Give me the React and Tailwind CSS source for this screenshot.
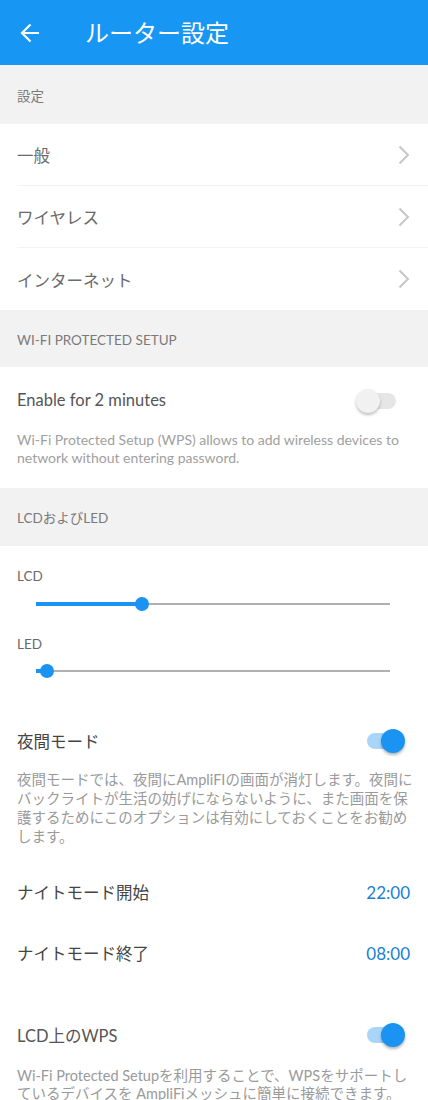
import { useState } from "react";

const font = { fontFamily: "Lato, 'Noto Sans CJK JP', sans-serif" };

function Chevron() {
  return (
    <svg width="12" height="20" viewBox="0 0 12 20" fill="none">
      <path d="M1.5 1.5 L10 10 L1.5 18.5" stroke="#c6c6c6" strokeWidth="2" />
    </svg>
  );
}

function Toggle({ on }) {
  if (on) {
    return (
      <div className="relative w-[38px] h-[24px] flex items-center">
        <div className="w-[36px] h-[16px] rounded-full bg-[#a9d5fb]" />
        <div className="absolute right-0 top-0 w-[24px] h-[24px] rounded-full bg-[#1a93f3] shadow-[0_2px_3px_rgba(0,0,0,0.3)]" />
      </div>
    );
  }
  return (
    <div className="relative w-[40px] h-[24px] flex items-center justify-end">
      <div className="w-[34px] h-[16px] rounded-full bg-[#e6e6e6]" />
      <div className="absolute left-0 top-0 w-[24px] h-[24px] rounded-full bg-[#f1f1f1] shadow-[0_2px_3px_rgba(0,0,0,0.25)]" />
    </div>
  );
}

function Slider({ value }) {
  return (
    <div className="h-[28px] flex items-center pl-[36px] pr-[38px]">
      <div className="relative flex-1 h-[2px] bg-[#b0b0b0]">
        <div className="absolute left-0 top-[-1px] h-[4px] bg-[#1a93f3]" style={{ width: `${value}%` }} />
        <div
          className="absolute top-[-6px] w-[14px] h-[14px] -ml-[7px] rounded-full bg-[#1a93f3]"
          style={{ left: `${value}%` }}
        />
      </div>
    </div>
  );
}

function SectionHeader({ children, h = "h-[58px]" }) {
  return (
    <div className={`${h} bg-[#f3f2f2] flex items-center px-[17px] pt-[3px] text-[13.5px] text-[#7a7a7a]`}>
      {children}
    </div>
  );
}

function NavRow({ label, last }) {
  return (
    <div className="h-[62px] flex items-center pl-[17px]">
      <div className={`h-full flex-1 flex items-center justify-between pr-[18px] ${last ? "" : "border-b border-[#f3f3f3]"}`}>
        <span className="text-[16.5px] text-[#6a6a6a] pt-[4px]">{label}</span>
        <Chevron />
      </div>
    </div>
  );
}

export default function App() {
  const [lcd] = useState(30);
  const [led] = useState(3);

  return (
    <div className="w-[428px] bg-white" style={font}>
      <div className="h-[65px] bg-[#1796f4] flex items-center">
        <div className="w-[85px] flex items-center pl-[20px]">
          <svg width="20" height="22" viewBox="0 0 20 22" fill="none">
            <path d="M19 11 H2 M10.5 2.5 L2 11 L10.5 19.5" stroke="white" strokeWidth="2.2" />
          </svg>
        </div>
        <span className="text-[24px] text-white">ルーター設定</span>
      </div>

      <SectionHeader h="h-[59px]">設定</SectionHeader>
      <NavRow label="一般" />
      <NavRow label="ワイヤレス" />
      <NavRow label="インターネット" last />

      <SectionHeader h="h-[57px]">WI-FI PROTECTED SETUP</SectionHeader>
      <div className="px-[17px]">
        <div className="h-[64px] flex items-center justify-between pt-[3px]">
          <span className="text-[16.5px] text-[#555]">Enable for 2 minutes</span>
          <div className="mr-[15px]">
            <Toggle on={false} />
          </div>
        </div>
        <p className="text-[14px] leading-[18px] text-[#a0a0a0] pb-[21px] whitespace-nowrap">
          Wi-Fi Protected Setup (WPS) allows to add wireless devices to
          <br />
          network without entering password.
        </p>
      </div>

      <SectionHeader>LCDおよびLED</SectionHeader>
      <div className="pt-[20px]">
        <div className="px-[17px] h-[20px] flex items-center text-[13.5px] text-[#6a6a6a]">LCD</div>
        <div className="mt-[4px]">
          <Slider value={lcd} />
        </div>
        <div className="mt-[16px] px-[17px] h-[20px] flex items-center text-[13.5px] text-[#6a6a6a]">LED</div>
        <div className="mt-[3px]">
          <Slider value={led} />
        </div>
      </div>

      <div className="px-[17px] pt-[31px]">
        <div className="h-[50px] flex items-center justify-between">
          <span className="text-[16.5px] text-[#444] pt-[2px]">夜間モード</span>
          <div className="mr-[6px]">
            <Toggle on />
          </div>
        </div>
        <p className="mt-[4px] text-[14.5px] leading-[19px] text-[#9a9a9a] whitespace-nowrap">
          夜間モードでは、夜間にAmpliFIの画面が消灯します。夜間に
          <br />
          バックライトが生活の妨げにならないように、また画面を保
          <br />
          護するためにこのオプションは有効にしておくことをお勧め
          <br />
          します。
        </p>

        <div className="mt-[16px] h-[61px] flex items-center justify-between">
          <span className="text-[16.5px] text-[#444] pt-[2px]">ナイトモード開始</span>
          <span className="text-[17px] text-[#1a7fd6] mr-[1px]">22:00</span>
        </div>
        <div className="h-[61px] flex items-center justify-between">
          <span className="text-[16.5px] text-[#444] pt-[2px]">ナイトモード終了</span>
          <span className="text-[17px] text-[#1a7fd6] mr-[1px]">08:00</span>
        </div>

        <div className="mt-[26px] h-[50px] flex items-center justify-between">
          <span className="text-[16.5px] text-[#555] pt-[2px]">LCD上のWPS</span>
          <div className="mr-[6px]">
            <Toggle on />
          </div>
        </div>
        <p className="mt-[7px] text-[14.5px] leading-[18px] text-[#9a9a9a] whitespace-nowrap">
          Wi-Fi Protected Setupを利用することで、WPSをサポートし
          <br />
          ているデバイスを AmpliFiメッシュに簡単に接続できます。
        </p>
      </div>
    </div>
  );
}
